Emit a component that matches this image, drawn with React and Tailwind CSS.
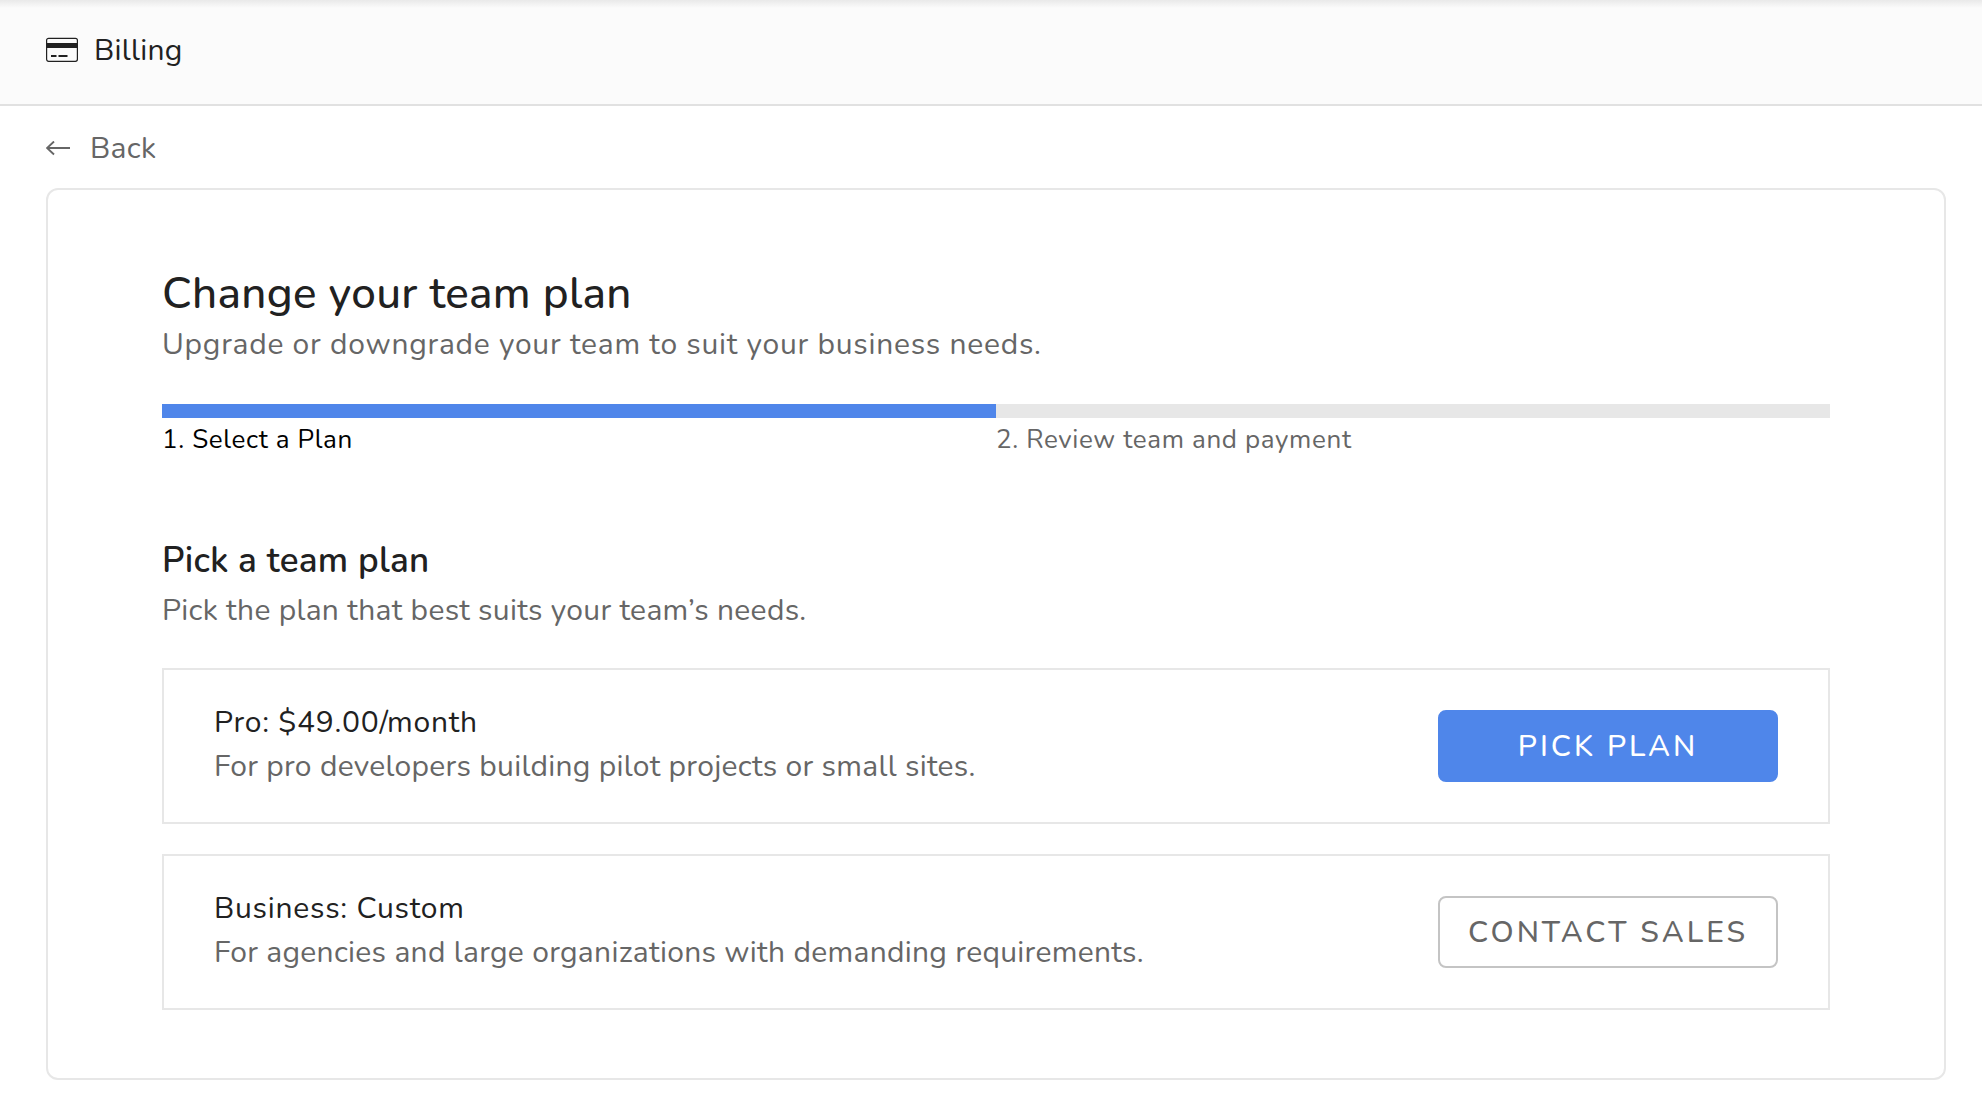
import React from "react";

function CardIcon() {
  return (
    <svg aria-hidden="true" className="h-7 w-8 shrink-0" viewBox="0 0 32 28" fill="none">
      <rect x="0.6" y="1.3" width="30.8" height="23" rx="2" stroke="#212121" strokeWidth="1.2" />
      <rect x="0" y="6" width="32" height="5" fill="#212121" />
      <path d="M5 19h5.5M12.500 19h9" stroke="#212121" strokeWidth="1.8" />
    </svg>
  );
}

function ArrowIcon() {
  return (
    <svg aria-hidden="true" className="h-4 w-6 shrink-0" viewBox="0 0 24 16" fill="none">
      <path d="M24 7H1M8 0.500L1 7l7 6.500" stroke="#666" strokeWidth="1.900" />
    </svg>
  );
}

const plans = [
  {
    name: "Pro: $49.00/month",
    description: "For pro developers building pilot projects or small sites.",
    action: "Pick plan",
    style: "border-[#4f86ea] bg-[#4f86ea] text-white",
  },
  {
    name: "Business: Custom",
    description: "For agencies and large organizations with demanding requirements.",
    action: "Contact sales",
    style: "border-[#c4c4c4] bg-white text-[#666]",
  },
];

export default function App() {
  return (
    <div className="min-h-screen bg-white font-['Nunito','Open_Sans',sans-serif] text-[30px] leading-[44px] tracking-[0.01em] text-[#212121]">
      <header className="flex items-center gap-4 border-b-2 border-[#e1e1e1] bg-[linear-gradient(#e9e9e9,#fbfbfb_8px)] pt-[29px] pr-9 pb-[31px] pl-[46px]">
        <CardIcon />
        <h1>Billing</h1>
      </header>

      <main className="pt-[21px] pr-9 pb-6 pl-[46px]">
        <a href="#billing" className="inline-flex items-center gap-5 align-top text-[#666]">
          <ArrowIcon />
          Back
        </a>

        <section className="mt-[17px] rounded-xl border-2 border-[#e7e7e7] px-[114px] pt-[75px] pb-[68px]">
          <h2 className="text-[44px] leading-[58px] font-medium">Change your team plan</h2>
          <p className="tracking-wide text-[#666]">Upgrade or downgrade your team to suit your business needs.</p>

          <ol className="mt-[37px] grid grid-cols-2 text-[26px] tracking-wide">
            <li aria-current="step" className="border-t-14 border-[#4f86ea] text-black">
              1. Select a Plan
            </li>
            <li className="border-t-14 border-[#e7e7e7] text-[#666]">2. Review team and payment</li>
          </ol>

          <h3 className="mt-[75px] text-[35px] leading-[48px] font-semibold">Pick a team plan</h3>
          <p className="mt-1 text-[#666]">Pick the plan that best suits your team’s needs.</p>

          <ul className="mt-[35px] flex flex-col gap-[30px]">
            {plans.map((plan) => (
              <li
                key={plan.name}
                className="flex items-start justify-between gap-8 border-2 border-[#e7e7e7] px-[50px] py-10"
              >
                <div className="-mt-[9px] -mb-4">
                  <h4 className="tracking-wide">{plan.name}</h4>
                  <p className="text-[#666]">{plan.description}</p>
                </div>
                <button
                  type="button"
                  className={`h-18 w-[340px] shrink-0 rounded-lg border-2 pt-0.5 font-medium tracking-widest uppercase ${plan.style}`}
                >
                  {plan.action}
                </button>
              </li>
            ))}
          </ul>
        </section>
      </main>
    </div>
  );
}
